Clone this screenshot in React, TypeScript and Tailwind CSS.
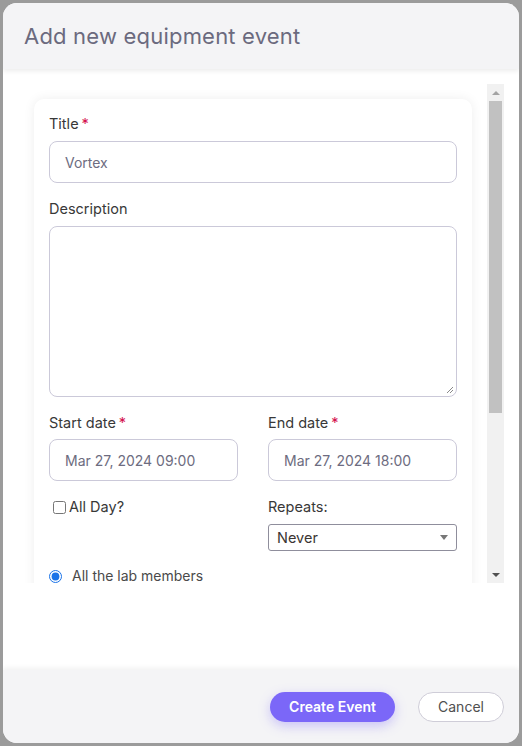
import React from 'react';

const font = { fontFamily: 'Inter, "Noto Sans", sans-serif' };

function Label({ text, required }: { text: string; required?: boolean }) {
    return (
        <div className="text-[14.5px] leading-[18px] text-[#383838]">
            {text}
            {required && <span className="ml-[3px] text-[#d4104e]">*</span>}
        </div>
    );
}

function Field({ value, top }: { value: string; top: string }) {
    return (
        <div className={`${top} h-[42px] rounded-[8px] border border-[#cbc9d9] px-[15px] flex items-center text-[14px] text-[#6d6c80]`}>
            {value}
        </div>
    );
}

function Scrollbar() {
    return (
        <div className="w-[17px] h-full bg-[#f1f1f1] flex flex-col items-center">
            <div className="h-[17px] flex items-center justify-center">
                <div className="w-0 h-0 border-l-[4px] border-r-[4px] border-b-[4px] border-l-transparent border-r-transparent border-b-[#a3a3a3]" />
            </div>
            <div className="w-[13px] h-[312px] bg-[#c1c1c1]" />
            <div className="flex-1" />
            <div className="h-[17px] flex items-center justify-center">
                <div className="w-0 h-0 border-l-[4px] border-r-[4px] border-t-[4px] border-l-transparent border-r-transparent border-t-[#505050]" />
            </div>
        </div>
    );
}

export default function App() {
    return (
        <div className="w-[522px] h-[746px] bg-[#9b9b9b] p-[3px]" style={font}>
            <div className="h-full w-full rounded-[14px] overflow-hidden flex flex-col bg-white">
                {/* Header */}
                <div className="relative z-10 h-[66px] shrink-0 bg-[#f4f4f6] px-[21px] flex items-center shadow-[0_2px_5px_rgba(0,0,0,0.08)]">
                    <h1 className="text-[22px] text-[#6b6a7e] tracking-[0.2px]">Add new equipment event</h1>
                </div>

                {/* Body */}
                <div className="h-[601px] shrink-0 bg-white pt-[15px] pl-[16px]">
                    <div className="h-[499px] w-[485px] flex">
                        <div className="flex-1 overflow-hidden px-[15px] pt-[15px]">
                            <div className="rounded-[10px] bg-white shadow-[0_0_12px_rgba(0,0,0,0.07)] px-[15px] pt-[16px] pb-[40px]">
                                <Label text="Title" required />
                                <Field value="Vortex" top="mt-[8px]" />

                                <div className="mt-[17px]">
                                    <Label text="Description" />
                                </div>
                                <div className="relative mt-[8px] h-[171px] rounded-[8px] border border-[#cbc9d9]">
                                    <svg className="absolute right-[2px] bottom-[2px]" width="8" height="8" viewBox="0 0 8 8">
                                        <path d="M7 1 L1 7 M7 4 L4 7" stroke="#8a8a8a" strokeWidth="1" />
                                    </svg>
                                </div>

                                <div className="mt-[17px] grid grid-cols-2 gap-x-[30px]">
                                    <div>
                                        <Label text="Start date" required />
                                        <Field value="Mar 27, 2024 09:00" top="mt-[7px]" />
                                    </div>
                                    <div>
                                        <Label text="End date" required />
                                        <Field value="Mar 27, 2024 18:00" top="mt-[7px]" />
                                    </div>

                                    <div className="mt-[17px] flex items-center h-[18px] pl-[4px]">
                                        <input type="checkbox" className="w-[13px] h-[13px] m-0 mr-[3px]" readOnly />
                                        <span className="text-[14.5px] text-[#383838]">All Day?</span>
                                    </div>
                                    <div className="mt-[17px]">
                                        <Label text="Repeats:" />
                                        <div className="mt-[8px] h-[27px] rounded-[3px] border border-[#8f8e9c] pl-[8px] pr-[8px] flex items-center justify-between text-[14.5px] text-[#3b3633]">
                                            <span>Never</span>
                                            <div className="w-0 h-0 border-l-[4px] border-r-[4px] border-t-[5px] border-l-transparent border-r-transparent border-t-[#777]" />
                                        </div>
                                    </div>
                                </div>

                                <div className="mt-[18px] flex items-center h-[14px]">
                                    <input type="radio" checked readOnly className="w-[13px] h-[13px] m-0 mr-[10px] accent-[#1a73e8]" />
                                    <span className="text-[14px] leading-[14px] text-[#4a4a4a]">All the lab members</span>
                                </div>
                            </div>
                        </div>
                        <Scrollbar />
                    </div>
                </div>

                {/* Footer */}
                <div className="relative flex-1 bg-[#f4f4f6] flex items-center justify-end gap-[23px] pr-[15px] shadow-[0_-2px_5px_rgba(0,0,0,0.06)]">
                    <button className="h-[30px] w-[125px] rounded-full bg-[#7b67f8] text-white text-[14px] font-semibold shadow-[0_4px_12px_rgba(123,103,248,0.35)]">
                        Create Event
                    </button>
                    <button className="h-[30px] w-[86px] rounded-full bg-white border border-[#cfcdd8] text-[14px] text-[#4f4f4f]">
                        Cancel
                    </button>
                </div>
            </div>
        </div>
    );
}
